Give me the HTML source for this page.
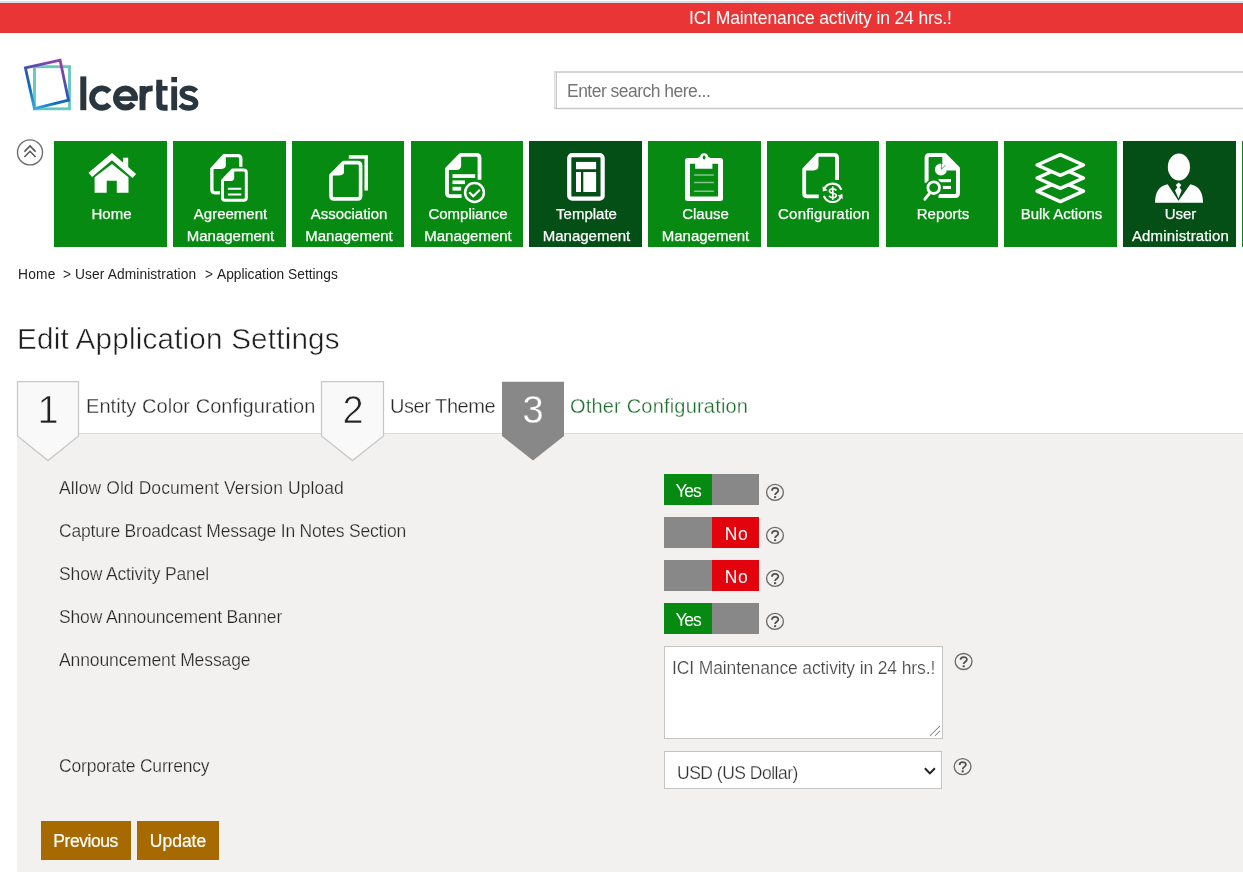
<!DOCTYPE html>
<html>
<head>
<meta charset="utf-8">
<title>Edit Application Settings</title>
<style>
html,body{margin:0;padding:0;background:#fff;overflow:hidden;}
body{width:1243px;height:872px;overflow:hidden;position:relative;font-family:"Liberation Sans",sans-serif;color:#222;}
.abs{position:absolute;}
.t{position:absolute;white-space:nowrap;line-height:1;will-change:transform;}
#topline{left:0;top:1px;width:1243px;height:2px;background:#d9dfe4;}
#banner{left:0;top:3px;width:1243px;height:30px;background:#e93535;}
#bannertxt{left:688.8px;top:9.7px;font-size:17.5px;color:#fff;letter-spacing:-0.13px;}
#searchtxt{left:567.3px;top:82.6px;font-size:17.5px;color:#757575;letter-spacing:-0.52px;}
.tile{position:absolute;top:141px;width:112.5px;height:106px;background:#078a12;}
.tile.dk{background:#044f16;}
.tile .lbl{-webkit-text-stroke:0.25px #fff;will-change:transform;position:absolute;left:-9px;right:-11px;top:62px;text-align:center;color:#fff;font-size:15px;line-height:21.9px;}
.cr{top:267.8px;font-size:13.75px;color:#222;}
#title{left:16.8px;top:323.9px;font-size:29.7px;color:#1e1e1e;letter-spacing:0.17px;-webkit-text-stroke:0.5px #fff;}
#panel{left:17px;top:433px;width:1226px;height:439px;background:#f2f1f0;border-top:1px solid #dcdcdc;box-sizing:border-box;}
.steplbl{font-size:20px;top:396.2px;color:#2a2a2a;-webkit-text-stroke:0.3px #fff;}
.stepnum{font-size:38px;top:390.8px;width:62px;text-align:center;color:#222;}
.lab{left:59.3px;font-size:17.5px;color:#272727;-webkit-text-stroke:0.25px #f2f1f0;}
.tog{position:absolute;left:664px;width:95px;height:31px;background:#888;}
.tog .on{position:absolute;left:0;top:0;width:48px;height:31px;background:#078a12;}
.tog .off{position:absolute;left:48px;top:0;width:47px;height:31px;background:#e2030d;}
.tog span{will-change:transform;position:absolute;top:8.6px;left:0.5px;width:100%;text-align:center;color:#fff;font-size:17.5px;line-height:1;letter-spacing:-0.4px;}
.btn{will-change:transform;position:absolute;top:821px;height:39px;background:#a66a00;color:#fff;font-size:17.5px;line-height:1;padding-top:11.9px;-webkit-text-stroke:0.2px #fff;box-sizing:border-box;text-align:center;}
</style>
</head>
<body>
<div id="topline" class="abs"></div>
<div id="banner" class="abs"></div>
<div id="bannertxt" class="t">ICI Maintenance activity in 24 hrs.!</div>

<!-- logo -->
<svg class="abs" style="left:15px;top:50px" width="200" height="70" viewBox="15 50 200 70">
  <defs>
    <linearGradient id="lg" x1="34.4" y1="108.5" x2="60.1" y2="60.2" gradientUnits="userSpaceOnUse">
      <stop offset="0" stop-color="#3aa7e4"/><stop offset="0.27" stop-color="#0b6fc2"/><stop offset="0.52" stop-color="#2f55b5"/><stop offset="0.8" stop-color="#7a45aa"/><stop offset="1" stop-color="#9a3fa3"/>
    </linearGradient>
  </defs>
  <rect x="34.5" y="66.7" width="35" height="42.1" fill="none" stroke="#66c9bd" stroke-width="2.9"/>
  <polygon points="25.4,67.9 60.1,60.2 68.5,100.1 34.4,108.5" fill="none" stroke="url(#lg)" stroke-width="2.8"/>
  <g fill="#2a363f" stroke="#2a363f" stroke-width="0">
    <rect x="80.3" y="76.4" width="6" height="33.8"/>
    <path d="M109.23,91.81A9.7,9.7 0 1 0 109.23,104.29" fill="none" stroke-width="5.9"/>
    <path d="M134.95,98.6A9.5,9.5 0 1 0 133.23,103.5" fill="none" stroke-width="5.8"/>
    <rect x="116" y="96.3" width="21.8" height="4.6"/>
    <rect x="139.6" y="86" width="5.9" height="24.2"/>
    <path d="M142.55,100V96.5Q142.55,88.3 152.7,88.3" fill="none" stroke-width="5.8"/>
    <path d="M159.3,79.8V103.5Q159.3,107.8 164,107.8H167.6" fill="none" stroke-width="6"/>
    <rect x="156.3" y="86" width="11.3" height="4.6"/>
    <rect x="171.3" y="86.3" width="5.8" height="23.9"/>
    <rect x="171.3" y="77" width="5.7" height="5.2"/>
    <path d="M196.2,91.2C194,88.9 191.5,88.1 188.6,88.1C184.8,88.1 182.2,89.9 182.2,92.7C182.2,99.3 195.7,96.4 195.7,103.3C195.7,106.3 192.8,108 189,108C185.6,108 182.5,106.9 180.4,104.6" fill="none" stroke-width="5.4"/>
  </g>
</svg>

<svg class="abs" style="left:550px;top:66px" width="693" height="48" viewBox="550 66 693 48">
  <path d="M554,72.05H1243M554,108.6H1243" stroke="#c9c9c9" stroke-width="1.5"/>
  <path d="M554.6,71.3V109.3" stroke="#dcdcdc" stroke-width="1"/>
  <path d="M556.3,72.6V108" stroke="#c4c4c4" stroke-width="1.2"/>
</svg>
<div id="searchtxt" class="t">Enter search here...</div>

<!-- collapse button -->
<svg class="abs" style="left:14px;top:136px" width="32" height="32" viewBox="14 136 32 32">
  <circle cx="30" cy="152.4" r="12.5" fill="#fff" stroke="#6e6e6e" stroke-width="1.4"/>
  <polyline points="24.4,151.6 30,145.9 35.6,151.6" fill="none" stroke="#555" stroke-width="1.5"/>
  <polyline points="24.4,157 30,151.3 35.6,157" fill="none" stroke="#555" stroke-width="1.5"/>
</svg>

<!-- tiles -->
<div class="tile" style="left:54px;width:113px"><div class="lbl">Home</div></div>
<div class="tile" style="left:173px;width:113px"><div class="lbl">Agreement<br>Management</div></div>
<div class="tile" style="left:292px;width:112px"><div class="lbl">Association<br>Management</div></div>
<div class="tile" style="left:411px;width:112px"><div class="lbl">Compliance<br>Management</div></div>
<div class="tile dk" style="left:529px;width:113px"><div class="lbl">Template<br>Management</div></div>
<div class="tile" style="left:648px;width:113px"><div class="lbl">Clause<br>Management</div></div>
<div class="tile" style="left:767px;width:112px"><div class="lbl" style="letter-spacing:0.2px">Configuration</div></div>
<div class="tile" style="left:886px;width:112px"><div class="lbl">Reports</div></div>
<div class="tile" style="left:1004px;width:113px"><div class="lbl">Bulk Actions</div></div>
<div class="tile dk" style="left:1123px;width:113px"><div class="lbl">User<br><span style="letter-spacing:0.15px">Administration</span></div></div>
<div class="tile" style="left:1242px;width:1px"></div>


<!-- nav icons (page coordinates) -->
<svg class="abs" style="left:0;top:141px" width="1243" height="106" viewBox="0 141 1243 106" fill="none" stroke-linejoin="round">
  <!-- home -->
  <g fill="#fff">
    <polyline points="90.3,174.8 112,156.6 134.3,176" fill="none" stroke="#fff" stroke-width="5.6" stroke-linejoin="miter"/>
    <rect x="123.1" y="157.7" width="5.1" height="11"/>
    <path d="M94.6,192.8V177.3L112,163.9L128.5,177.3V192.8H116.8V180.8H106.7V192.8Z"/>
  </g>
  <!-- agreement -->
  <g stroke="#fff" stroke-width="3.3">
    <path d="M240.8,166.7V158.6Q240.8,155.6 237.8,155.6H224L211.9,168.8V189.8Q211.9,192.8 214.9,192.8H220"/>
    <path d="M225.8,155V165.6Q225.8,169 220.6,169H211.5V168Z" fill="#fff" stroke="none"/>
    <path d="M232.8,169.9H243.8Q246.3,169.9 246.3,172.4V197.8Q246.3,200.3 243.8,200.3H225Q222.5,200.3 222.5,197.8V180.6Z" fill="#078a12" stroke-width="3"/>
    <path d="M234.2,169.5V178Q234.2,181.1 230.3,181.1H222V180Z" fill="#fff" stroke="none"/>
    <path d="M227.9,188.7H241.3M227.9,194.4H241.3" stroke-width="2"/>
  </g>
  <!-- association -->
  <g stroke="#fff">
    <path d="M348.8,157.05H366.2V190.6" stroke-width="3.5" stroke-linejoin="miter"/>
    <path d="M343.6,162.6H357.6Q360.6,162.6 360.6,165.6V195.9Q360.6,198.9 357.6,198.9H334Q331,198.9 331,195.9V175.2Z" fill="#078a12" stroke-width="3.6"/>
    <path d="M344,163V171.8Q344,175.6 338.6,175.6H331.5Z" fill="#fff" stroke="none"/>
  </g>
  <!-- compliance -->
  <g stroke="#fff">
    <path d="M479.5,179.7V157.9Q479.5,154.9 476.5,154.9H460.6L447,168.9V193.1Q447,196.1 450,196.1H461.6" stroke-width="3.8"/>
    <path d="M461.1,155.5V165.6Q461.1,170.1 456,170.1H447.5Z" fill="#fff" stroke="none"/>
    <g fill="#fff" stroke="none">
      <rect x="452.5" y="174.2" width="22.7" height="3.7"/>
      <rect x="452.5" y="180.4" width="12.4" height="3.7"/>
      <rect x="452.5" y="186.8" width="8.6" height="3.8"/>
    </g>
    <circle cx="474.5" cy="192.5" r="11.6" fill="#078a12" stroke="none"/>
    <circle cx="474.5" cy="192.5" r="9.4" stroke-width="2.5"/>
    <polyline points="469.2,192.2 473.3,196.2 479.8,189.8" stroke-width="2.2" stroke-linejoin="miter"/>
  </g>
  <!-- template -->
  <g>
    <rect x="569.25" y="155.05" width="33.4" height="43.6" rx="3" stroke="#fff" stroke-width="4.2"/>
    <g fill="#fff">
      <rect x="576" y="161.9" width="20.1" height="7.3"/>
      <rect x="576" y="172" width="5" height="20"/>
      <rect x="583.3" y="172" width="12.8" height="20"/>
    </g>
  </g>
  <!-- clause -->
  <g>
    <path fill-rule="evenodd" fill="#fff" d="M687.5,158.1H720.5Q723,158.1 723,160.6V198.4Q723,200.9 720.5,200.9H687.5Q685,200.9 685,198.4V160.6Q685,158.1 687.5,158.1ZM690,163.7V196.5H718.1V163.7Z"/>
    <path d="M695.2,168.7V159H696L700.1,156.6A4.05,4.05 0 0 1 708.1,156.6L712,159H712.4V168.7Z" fill="#fff"/>
    <ellipse cx="704.1" cy="157.5" rx="1.4" ry="2" fill="#078a12"/>
    <path d="M694.1,174.9H713.9M694.1,182.5H713.9M694.1,191.3H713.9" stroke="#fff" stroke-opacity="0.5" stroke-width="1.5"/>
  </g>
  <!-- configuration -->
  <g stroke="#fff">
    <path d="M837.1,180.1V157.9Q837.1,154.9 834.1,154.9H818L804.2,169.2V193.4Q804.2,196.4 807.2,196.4H818.7" stroke-width="3.8"/>
    <path d="M818.5,155.5V165.6Q818.5,170.5 813.3,170.5H804.7Z" fill="#fff" stroke="none"/>
    <path d="M824,189.5A9.2,9.2 0 0 1 841.3,189.8" stroke-width="2.1"/>
    <path d="M841.2,196.1A9.2,9.2 0 0 1 823.9,195.8" stroke-width="2.1"/>
    <path d="M822.6,186.3L822.8,191.6L827.6,190.2Z" fill="#fff" stroke="none"/>
    <path d="M842.7,199.3L842.4,194L837.6,195.4Z" fill="#fff" stroke="none"/>
    <path d="M836.2,190.6C835.4,188.5 829.4,188.1 829.4,190.9C829.4,193.5 836.3,192.6 836.3,195.5C836.3,198.5 830,198 829.1,195.7M832.8,186.6V199.7" stroke-width="1.7" stroke-linejoin="round"/>
  </g>
  <!-- reports -->
  <g stroke="#fff">
    <path d="M926.6,182.8V157.9Q926.6,154.9 929.6,154.9H944.6L958,168.5V193Q958,196 955,196H938.5" stroke-width="4"/>
    <path d="M942.3,154.5V163L947.1,170.5H958.5V168L945,154.5Z" fill="#fff" stroke="none"/>
    <circle cx="940.9" cy="169.4" r="6" fill="#fff" stroke="none"/>
    <path d="M941.4,169.4V163M941.4,169.4L945.5,165" stroke="#078a12" stroke-width="0.7"/>
    <g fill="#fff" stroke="none">
      <rect x="938.5" y="179" width="12.4" height="3.2"/>
      <rect x="942.7" y="185.9" width="8.2" height="3.1"/>
    </g>
    <circle cx="933.7" cy="187.7" r="8.9" fill="#078a12" stroke="none"/>
    <circle cx="933.7" cy="187.7" r="5.8" stroke-width="2.8"/>
    <path d="M929.6,193.2L924.9,199.2" stroke-width="3" stroke-linecap="round"/>
  </g>
  <!-- bulk actions -->
  <g stroke="#fff" stroke-width="3.5" fill="#078a12" stroke-linejoin="round">
    <path d="M1060.3,180.85L1083.5,191.2L1060.3,201.55L1037.1,191.2Z"/>
    <path d="M1060.3,167.65L1083.5,178L1060.3,188.35L1037.1,178Z"/>
    <path d="M1060.3,154.65L1083.5,165L1060.3,175.35L1037.1,165Z"/>
  </g>
  <!-- user -->
  <g fill="#fff">
    <ellipse cx="1178.9" cy="167" rx="11.1" ry="13.5"/>
    <path d="M1155.1,202.8C1155.1,192.5 1158.5,186.3 1167.6,184.2L1178.5,200.7L1190.3,184.2C1199.5,186.3 1203,192.5 1203,202.8Z"/>
    <path d="M1178.6,182.5L1181.4,184.9L1179.6,187.3L1181.6,190.4L1178.5,198.4L1175,190.4L1177.4,187.3L1175.8,184.9Z"/>
  </g>
</svg>

<div class="t cr" style="left:18.2px;letter-spacing:0.2px">Home</div>
<div class="t cr" style="left:63.3px">&gt;</div>
<div class="t cr" style="left:75.4px;letter-spacing:0.11px">User Administration</div>
<div class="t cr" style="left:204.7px">&gt;</div>
<div class="t cr" style="left:217.2px">Application Settings</div>
<div id="title" class="t">Edit Application Settings</div>

<div id="panel" class="abs"></div>

<!-- wizard steps -->
<svg class="abs" style="left:0;top:375px" width="800" height="95" viewBox="0 375 800 95">
  <polygon points="17.5,381.5 78.5,381.5 78.5,436 48,460.6 17.5,436" fill="#f9f9f9" stroke="#c8c8c8" stroke-width="1.25"/>
  <polygon points="321.5,381.5 383.5,381.5 383.5,436 352.5,460.6 321.5,436" fill="#f9f9f9" stroke="#c8c8c8" stroke-width="1.25"/>
  <polygon points="502,381.7 564,381.7 564,436 533,460.6 502,436" fill="#888"/>
</svg>
<div class="t stepnum" style="left:17px;-webkit-text-stroke:0.7px #f9f9f9">1</div>
<div class="t stepnum" style="left:321.5px;-webkit-text-stroke:0.7px #f9f9f9">2</div>
<div class="t stepnum" style="left:502px;color:#fff;-webkit-text-stroke:0.3px #888">3</div>
<div class="t steplbl" style="left:86.3px;letter-spacing:0.056px">Entity Color Configuration</div>
<div class="t steplbl" style="left:390.3px;letter-spacing:-0.46px">User Theme</div>
<div class="t steplbl" style="left:570.3px;color:#1b6f2b;letter-spacing:0.19px">Other Configuration</div>

<!-- form -->
<div class="t lab" style="top:480.3px;letter-spacing:0.085px">Allow Old Document Version Upload</div>
<div class="t lab" style="top:523.3px;letter-spacing:-0.19px">Capture Broadcast Message In Notes Section</div>
<div class="t lab" style="top:566.3px;letter-spacing:-0.14px">Show Activity Panel</div>
<div class="t lab" style="top:609.3px;letter-spacing:-0.15px">Show Announcement Banner</div>
<div class="t lab" style="top:652.3px;letter-spacing:-0.11px">Announcement Message</div>
<div class="t lab" style="top:757.6px;letter-spacing:-0.18px">Corporate Currency</div>

<div class="tog" style="top:474px"><div class="on"><span style="letter-spacing:-1.1px;left:-0.3px">Yes</span></div></div>
<div class="tog" style="top:517px"><div class="off"><span style="letter-spacing:0.6px;left:0.6px">No</span></div></div>
<div class="tog" style="top:560px"><div class="off"><span style="letter-spacing:0.6px;left:0.6px">No</span></div></div>
<div class="tog" style="top:603px"><div class="on"><span style="letter-spacing:-1.1px;left:-0.3px">Yes</span></div></div>

<div class="abs" id="ta" style="left:664px;top:646px;width:279px;height:93px;box-sizing:border-box;border:1px solid #c4c4c4;background:#fff;"></div>
<div class="t" style="left:671.8px;top:659.7px;font-size:17.5px;color:#484848;letter-spacing:-0.12px;-webkit-text-stroke:0.2px #fff;">ICI Maintenance activity in 24 hrs.!</div>
<div class="abs" id="sel" style="left:664px;top:751px;width:278px;height:38px;box-sizing:border-box;border:1px solid #c4c4c4;background:#fff;"></div>
<div class="t" style="left:676.8px;top:765.3px;font-size:17.5px;color:#303030;letter-spacing:-0.5px;-webkit-text-stroke:0.25px #fff;">USD (US Dollar)</div>


<svg class="abs" style="left:640px;top:460px" width="400" height="350" viewBox="640 460 400 350">
<g transform="translate(775,492.4)"><ellipse rx="8.4" ry="8" fill="none" stroke="#6c6c6c" stroke-width="1.35"/><path d="M-3,-1.7C-3,-5.2 3.3,-5.4 3.3,-2C3.3,0.2 0.1,0.4 0.1,2.6" fill="none" stroke="#505050" stroke-width="1.8"/><rect x="-0.95" y="3.8" width="2.1" height="1.9" fill="#505050"/></g><g transform="translate(775,535.4)"><ellipse rx="8.4" ry="8" fill="none" stroke="#6c6c6c" stroke-width="1.35"/><path d="M-3,-1.7C-3,-5.2 3.3,-5.4 3.3,-2C3.3,0.2 0.1,0.4 0.1,2.6" fill="none" stroke="#505050" stroke-width="1.8"/><rect x="-0.95" y="3.8" width="2.1" height="1.9" fill="#505050"/></g><g transform="translate(775,578.4)"><ellipse rx="8.4" ry="8" fill="none" stroke="#6c6c6c" stroke-width="1.35"/><path d="M-3,-1.7C-3,-5.2 3.3,-5.4 3.3,-2C3.3,0.2 0.1,0.4 0.1,2.6" fill="none" stroke="#505050" stroke-width="1.8"/><rect x="-0.95" y="3.8" width="2.1" height="1.9" fill="#505050"/></g><g transform="translate(775,621.4)"><ellipse rx="8.4" ry="8" fill="none" stroke="#6c6c6c" stroke-width="1.35"/><path d="M-3,-1.7C-3,-5.2 3.3,-5.4 3.3,-2C3.3,0.2 0.1,0.4 0.1,2.6" fill="none" stroke="#505050" stroke-width="1.8"/><rect x="-0.95" y="3.8" width="2.1" height="1.9" fill="#505050"/></g><g transform="translate(963.6,661.5)"><ellipse rx="8.4" ry="8" fill="none" stroke="#6c6c6c" stroke-width="1.35"/><path d="M-3,-1.7C-3,-5.2 3.3,-5.4 3.3,-2C3.3,0.2 0.1,0.4 0.1,2.6" fill="none" stroke="#505050" stroke-width="1.8"/><rect x="-0.95" y="3.8" width="2.1" height="1.9" fill="#505050"/></g><g transform="translate(962.6,766.6)"><ellipse rx="8.4" ry="8" fill="none" stroke="#6c6c6c" stroke-width="1.35"/><path d="M-3,-1.7C-3,-5.2 3.3,-5.4 3.3,-2C3.3,0.2 0.1,0.4 0.1,2.6" fill="none" stroke="#505050" stroke-width="1.8"/><rect x="-0.95" y="3.8" width="2.1" height="1.9" fill="#505050"/></g>
<polyline points="924.9,768.3 929.9,773.4 934.9,768.3" fill="none" stroke="#222" stroke-width="2"/>
<path d="M929.9,735.8L940,725.9M934.9,735.8L940,730.8" stroke="#6a6a6a" stroke-width="1"/>
</svg>
<div class="btn" style="left:41px;width:90px;letter-spacing:-0.45px;text-indent:-0.8px;">Previous</div>
<div class="btn" style="left:137px;width:82px;">Update</div>
</body>
</html>
